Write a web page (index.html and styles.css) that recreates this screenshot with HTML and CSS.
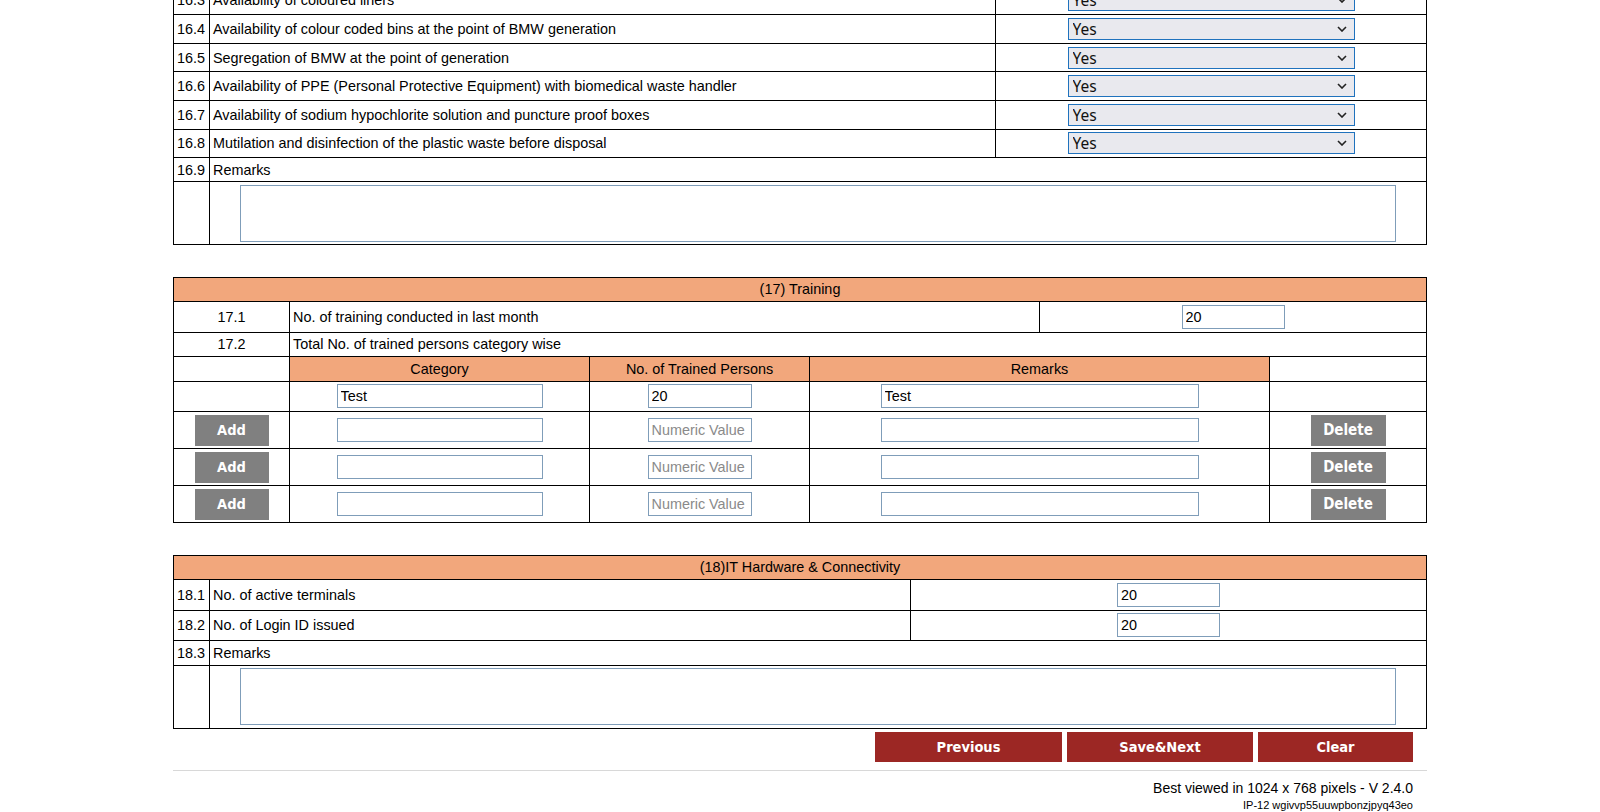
FILE: index.html
```html
<!DOCTYPE html>
<html>
<head>
<meta charset="utf-8">
<title>Inspection Form</title>
<link rel="stylesheet" href="styles.css">
</head>
<body>
<div class="page">
  <table class="grid t16">
    <colgroup><col class="w36"><col class="w786"><col></colgroup>
    <tr class="r28"><td>16.3</td><td>Availability of coloured liners</td><td class="center"><select class="yn"><option>Yes</option><option>No</option></select></td></tr>
    <tr class="r28"><td>16.4</td><td>Availability of colour coded bins at the point of BMW generation</td><td class="center"><select class="yn"><option>Yes</option><option>No</option></select></td></tr>
    <tr class="r28"><td>16.5</td><td>Segregation of BMW at the point of generation</td><td class="center"><select class="yn"><option>Yes</option><option>No</option></select></td></tr>
    <tr class="r28"><td>16.6</td><td>Availability of PPE (Personal Protective Equipment) with biomedical waste handler</td><td class="center"><select class="yn"><option>Yes</option><option>No</option></select></td></tr>
    <tr class="r28"><td>16.7</td><td>Availability of sodium hypochlorite solution and puncture proof boxes</td><td class="center"><select class="yn"><option>Yes</option><option>No</option></select></td></tr>
    <tr class="r28"><td>16.8</td><td>Mutilation and disinfection of the plastic waste before disposal</td><td class="center"><select class="yn"><option>Yes</option><option>No</option></select></td></tr>
    <tr class="r24s"><td>16.9</td><td colspan="2">Remarks</td></tr>
    <tr class="r61"><td></td><td colspan="2" class="center nopad"><textarea class="remarks"></textarea></td></tr>
  </table>

  <table class="grid t17 gap">
    <colgroup><col class="w116"><col class="w300"><col class="w220"><col class="w230"><col class="w230"><col></colgroup>
    <tr class="r24"><td colspan="6" class="hd">(17) Training</td></tr>
    <tr class="r30"><td class="center">17.1</td><td colspan="3">No. of training conducted in last month</td><td colspan="2" class="center"><input class="fld w103" value="20"></td></tr>
    <tr class="r24"><td class="center">17.2</td><td colspan="5">Total No. of trained persons category wise</td></tr>
    <tr class="r24"><td></td><td class="hd">Category</td><td class="hd">No. of Trained Persons</td><td colspan="2" class="hd">Remarks</td><td></td></tr>
    <tr class="r30"><td></td><td class="center"><input class="fld w206" value="Test"></td><td class="center"><input class="fld w104" value="20"></td><td colspan="2" class="center"><input class="fld w318" value="Test"></td><td></td></tr>
    <tr class="r37"><td class="center"><button class="gbtn w74">Add</button></td><td class="center"><input class="fld w206"></td><td class="center"><input class="fld w104" placeholder="Numeric Value"></td><td colspan="2" class="center"><input class="fld w318"></td><td class="center"><button class="gbtn del w75">Delete</button></td></tr>
    <tr class="r37"><td class="center"><button class="gbtn w74">Add</button></td><td class="center"><input class="fld w206"></td><td class="center"><input class="fld w104" placeholder="Numeric Value"></td><td colspan="2" class="center"><input class="fld w318"></td><td class="center"><button class="gbtn del w75">Delete</button></td></tr>
    <tr class="r37"><td class="center"><button class="gbtn w74">Add</button></td><td class="center"><input class="fld w206"></td><td class="center"><input class="fld w104" placeholder="Numeric Value"></td><td colspan="2" class="center"><input class="fld w318"></td><td class="center"><button class="gbtn del w75">Delete</button></td></tr>
  </table>

  <table class="grid t18 gap">
    <colgroup><col class="w36"><col class="w701"><col></colgroup>
    <tr class="r24"><td colspan="3" class="hd">(18)IT Hardware &amp; Connectivity</td></tr>
    <tr class="r30"><td>18.1</td><td>No. of active terminals</td><td class="center"><input class="fld w103" value="20"></td></tr>
    <tr class="r30"><td>18.2</td><td>No. of Login ID issued</td><td class="center"><input class="fld w103" value="20"></td></tr>
    <tr class="r24"><td>18.3</td><td colspan="2">Remarks</td></tr>
    <tr class="r62"><td></td><td colspan="2" class="center nopad"><textarea class="remarks"></textarea></td></tr>
  </table>

  <div class="actions">
    <button class="rbtn w187">Previous</button>
    <button class="rbtn w186">Save&amp;Next</button>
    <button class="rbtn w155">Clear</button>
  </div>

  <div class="footer">
    <div class="best">Best viewed in 1024 x 768 pixels - V 2.4.0</div>
    <div class="ip">IP-12 wgivvp55uuwpbonzjpyq43eo</div>
  </div>
</div>
</body>
</html>
```

FILE: styles.css
```css
html, body {
  margin: 0;
  padding: 0;
  background: #fff;
}
body {
  font-family: "Liberation Sans", Arial, sans-serif;
  font-size: 14.4px;
  color: #000;
}
.page {
  width: 1254px;
  margin: 0 auto;
}
.grid {
  width: 100%;
  border-collapse: collapse;
  table-layout: fixed;
}
.t16 {
  margin-top: -14.3px;
}
.gap {
  margin-top: 31.5px;
}
.grid td {
  border: 1px solid #000;
  padding: 0 3px;
  vertical-align: middle;
  white-space: nowrap;
  overflow: hidden;
}
.grid td.nopad { padding: 0; }
.center { text-align: center; }
.hd {
  background: #f2a77c;
  text-align: center;
}
.w36 { width: 36px; }
.w786 { width: 786px; }
.w701 { width: 701px; }
.w116 { width: 116px; }
.w300 { width: 300px; }
.w220 { width: 220px; }
.w230 { width: 230px; }

.r28 { height: 28.57px; }
.r24 { height: 24.5px; }
.r24s { height: 24px; }
.r30 { height: 30.5px; }
.r37 { height: 37px; }
.r61 { height: 63px; }
.r62 { height: 63px; }

.yn {
  -webkit-appearance: none;
  appearance: none;
  width: 287px;
  height: 22px;
  box-sizing: border-box;
  border: 1px solid #1f72bd;
  border-radius: 0;
  background-color: #e9e9ee;
  background-image: url("data:image/svg+xml,%3Csvg xmlns='http://www.w3.org/2000/svg' width='10' height='6' viewBox='0 0 10 6'%3E%3Cpath d='M1 1l4 4 4-4' fill='none' stroke='%23222' stroke-width='1.6'/%3E%3C/svg%3E");
  background-repeat: no-repeat;
  background-position: right 7px center;
  font-family: "Noto Sans", "Open Sans", sans-serif;
  font-size: 15.5px;
  line-height: 18px;
  color: #111;
  padding: 0 0 0 4px;
  vertical-align: middle;
}
.remarks {
  width: 95%;
  height: 57px;
  box-sizing: border-box;
  border: 1px solid #7f9db9;
  resize: none;
  display: block;
  margin: 0 auto;
  font-family: "Liberation Sans", Arial, sans-serif;
  font-size: 14px;
}
.fld {
  height: 24px;
  box-sizing: border-box;
  border: 1px solid #7f9db9;
  padding: 0 3px;
  font-family: "Liberation Sans", Arial, sans-serif;
  font-size: 14.4px;
  color: #000;
  vertical-align: middle;
  margin: 0;
}
.fld::placeholder {
  color: #8a8a8a;
}
.w103 { width: 103px; }
.w104 { width: 104px; }
.w206 { width: 206px; }
.w318 { width: 318px; }
.w74 { width: 74px; }
.w75 { width: 75px; }

.gbtn {
  height: 31px;
  background: #808080;
  color: #fff;
  border: none;
  font-family: "DejaVu Sans", Verdana, sans-serif;
  font-stretch: condensed;
  font-weight: bold;
  font-size: 14.5px;
  padding: 0;
  vertical-align: middle;
  margin: 0;
}
.gbtn.del {
  font-family: "Liberation Sans Narrow", "DejaVu Sans Condensed", sans-serif;
  font-size: 15px;
}

.actions {
  display: flex;
  justify-content: flex-end;
  gap: 5px;
  padding-right: 14px;
  margin-top: 3px;
}
.rbtn {
  height: 30px;
  background: #9c2724;
  color: #fff;
  border: none;
  font-family: "DejaVu Sans", Verdana, sans-serif;
  font-stretch: condensed;
  font-weight: bold;
  font-size: 14.5px;
  padding: 0;
}
.w187 { width: 187px; }
.w186 { width: 186px; }
.w155 { width: 155px; }

.footer {
  margin-top: 8px;
  border-top: 1px solid #d8d8d8;
  padding-right: 14px;
  text-align: right;
}
.best {
  margin-top: 9px;
  font-size: 14px;
  line-height: 16px;
}
.ip {
  margin-top: 3px;
  font-size: 11px;
  line-height: 13px;
}
```
